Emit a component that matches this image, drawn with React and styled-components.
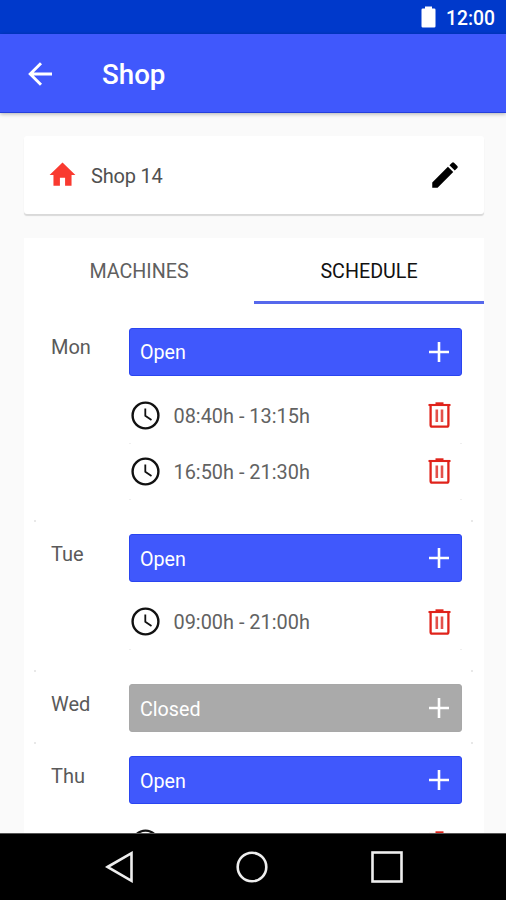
import React from 'react'
import styled, { createGlobalStyle } from 'styled-components'

const days = [
  { name: 'Mon', open: true, hours: ['08:40h - 13:15h', '16:50h - 21:30h'] },
  { name: 'Tue', open: true, hours: ['09:00h - 21:00h'] },
  { name: 'Wed', open: false, hours: [] },
  { name: 'Thu', open: true, hours: [''] },
]

function BackIcon() {
  return (
    <svg width="25" height="24" viewBox="0 0 25 24" fill="none" stroke="#fff" strokeWidth="2.9">
      <path d="M24 12H2.5M13 1.2L2.2 12L13 22.8" />
    </svg>
  )
}

function BatteryIcon() {
  return (
    <svg width="15" height="22" viewBox="0 0 15 22" fill="#fff">
      <path d="M4 0.5h7v2h2.2a1.3 1.3 0 0 1 1.3 1.3v16.4a1.3 1.3 0 0 1-1.3 1.3H1.8a1.3 1.3 0 0 1-1.3-1.3V3.8a1.3 1.3 0 0 1 1.3-1.3H4z" />
    </svg>
  )
}

function HomeIcon() {
  return (
    <svg width="31" height="32" viewBox="0 0 24 24" preserveAspectRatio="none" fill="#f93a30">
      <path d="M10 20v-6h4v6h5v-8h3L12 2.6 2 12h3v8z" />
    </svg>
  )
}

function PencilIcon() {
  return (
    <svg width="34" height="34" viewBox="0 0 24 24" fill="#000">
      <path d="M3 17.25V21h3.75L17.81 9.94l-3.75-3.75L3 17.25zM20.71 7.04a1 1 0 0 0 0-1.41l-2.34-2.34a1 1 0 0 0-1.41 0l-1.83 1.83 3.75 3.75 1.83-1.83z" />
    </svg>
  )
}

function PlusIcon() {
  return (
    <svg width="20" height="20" viewBox="0 0 20 20" stroke="#fff" strokeWidth="2.6">
      <path d="M10 0v20M0 10h20" />
    </svg>
  )
}

function ClockIcon() {
  return (
    <svg width="29" height="29" viewBox="0 0 29 29" fill="none" stroke="#111">
      <circle cx="14.5" cy="14.5" r="12.9" strokeWidth="2.4" />
      <path d="M14.3 7.5v7.3l6.2 4.2" strokeWidth="1.8" />
    </svg>
  )
}

function TrashIcon() {
  return (
    <svg width="23" height="26" viewBox="0 0 23 26" fill="none" stroke="#e0231b">
      <path d="M0.5 3H22.5" strokeWidth="2.1" />
      <path d="M7.5 1.5h8" strokeWidth="2.4" />
      <path d="M2.6 3v20a1.7 1.7 0 0 0 1.7 1.7h14.4a1.7 1.7 0 0 0 1.7-1.7V3" strokeWidth="2.3" />
      <path d="M8.8 7.5v12.5M14 7.5v12.5" strokeWidth="2.6" stroke="#e4514b" />
    </svg>
  )
}

function Day({ day }) {
  return (
    <DayRow $busy={day.hours.length > 0}>
      <DayName>{day.name}</DayName>
      <DayContent>
        <StatusButton $open={day.open}>
          <span>{day.open ? 'Open' : 'Closed'}</span>
          <PlusIcon />
        </StatusButton>
        {day.hours.length > 0 && (
          <HourList>
            {day.hours.map((hour) => (
              <Hour key={hour}>
                <ClockIcon />
                <span>{hour}</span>
                <TrashIcon />
              </Hour>
            ))}
          </HourList>
        )}
      </DayContent>
    </DayRow>
  )
}

function App() {
  return (
    <Screen>
      <GlobalStyle />
      <StatusBar>
        <BatteryIcon />
        <span>12:00</span>
      </StatusBar>
      <AppBar>
        <BackIcon />
        <h1>Shop</h1>
      </AppBar>
      <Content>
        <ShopCard>
          <HomeIcon />
          <span>Shop 14</span>
          <PencilIcon />
        </ShopCard>
        <ScheduleCard>
          <Tabs>
            <Tab>MACHINES</Tab>
            <Tab $active>SCHEDULE</Tab>
          </Tabs>
          <DayList>
            {days.map((day) => (
              <Day key={day.name} day={day} />
            ))}
          </DayList>
        </ScheduleCard>
      </Content>
      <NavBar>
        <svg width="28" height="32" viewBox="0 0 28 32">
          <path d="M2.5 16L26.5 2.2V29.8z" />
        </svg>
        <svg width="32" height="32" viewBox="0 0 32 32">
          <circle cx="16" cy="16" r="14.3" />
        </svg>
        <svg width="32" height="32" viewBox="0 0 32 32">
          <rect x="1.5" y="1.5" width="29" height="29" />
        </svg>
      </NavBar>
    </Screen>
  )
}

export default App

const GlobalStyle = createGlobalStyle`
  body {
    margin: 0;
    font-family: Roboto, sans-serif;
  }

  * {
    box-sizing: border-box;
  }
`

const Screen = styled.div`
  width: 506px;
  height: 900px;
  display: flex;
  flex-direction: column;
  overflow: hidden;
  background: #fafafa;
`

const StatusBar = styled.div`
  flex: none;
  height: 34px;
  padding: 2px 11px 0 0;
  display: flex;
  align-items: center;
  justify-content: flex-end;
  gap: 10px;
  background: #0039cb;
  color: #fff;
  font-size: 19.3px;
  font-weight: 500;

  svg {
    margin-top: -3px;
  }
`

const AppBar = styled.header`
  flex: none;
  height: 79px;
  padding: 1px 0 0 28px;
  display: flex;
  align-items: center;
  gap: 49px;
  background: #4058fc;
  border-bottom: 1px solid #2540dc;
  box-shadow: 0 1px 4px rgba(0, 0, 0, 0.3);
  color: #fff;
  z-index: 1;

  h1 {
    margin: 3px 0 0;
    font-size: 27.7px;
    line-height: 32px;
    font-weight: 500;
  }
`

const Content = styled.main`
  flex: 1;
  min-height: 0;
  padding: 23px 22px 0 24px;
  display: flex;
  flex-direction: column;
  gap: 24px;
  overflow: hidden;
`

const ShopCard = styled.section`
  flex: none;
  height: 78px;
  padding: 0 22px 0 23px;
  display: flex;
  align-items: center;
  background: #fff;
  border-radius: 3px;
  box-shadow: 0 2px 1px #d9d9d9;
  color: #505050;
  font-size: 20px;

  span {
    flex: 1;
    margin: 1px 0 0 13px;
    letter-spacing: -0.2px;
  }
`

const ScheduleCard = styled.section`
  flex: none;
  background: #fff;
`

const Tabs = styled.div`
  height: 66px;
  display: grid;
  grid-template-columns: 1fr 1fr;
`

const Tab = styled.button`
  padding: 4px 0 0;
  border: none;
  border-bottom: 3px solid ${(props) => (props.$active ? '#5668ec' : 'transparent')};
  background: none;
  color: ${(props) => (props.$active ? '#111' : '#606060')};
  font-family: inherit;
  font-size: 19.7px;
`

const DayList = styled.div`
  padding: 11.5px 10px 0;
`

// faint specks where the corners of neighbouring rows meet
const DayRow = styled.div`
  padding: 12px 12.5px ${(props) => (props.$busy ? '22px' : '12px')} 17px;
  display: flex;
  background:
    linear-gradient(#e8e8e8, #e8e8e8) left bottom / 2px 2px no-repeat,
    linear-gradient(#e8e8e8, #e8e8e8) right 1px bottom / 2px 2px no-repeat;

  &:first-child {
    padding-bottom: 22.5px;
  }
`

const DayName = styled.div`
  width: 77.5px;
  padding-top: 8px;
  color: #5a5a5a;
  font-size: 20px;
  line-height: 24px;

  ${DayRow}:first-child & {
    padding-top: 7px;
  }
`

const DayContent = styled.div`
  flex: 1;
`

const StatusButton = styled.button`
  width: 100%;
  height: 48px;
  padding: 0 12px 0 10.5px;
  display: flex;
  align-items: center;
  justify-content: space-between;
  border: 1px solid ${(props) => (props.$open ? '#2a45f0' : '#a8a8a8')};
  border-radius: 3px;
  background: ${(props) => (props.$open ? '#4058fc' : '#aaa')};
  color: #fff;
  font-family: inherit;
  font-size: 19.7px;

  span {
    margin-top: 2px;
  }
`

const HourList = styled.div`
  padding-top: 12px;
`

const Hour = styled.div`
  height: 56px;
  padding: 0 10.5px 0 2px;
  display: flex;
  align-items: center;
  background:
    linear-gradient(#efefef, #efefef) left bottom / 2px 1px no-repeat,
    linear-gradient(#efefef, #efefef) right bottom / 2px 1px no-repeat;
  color: #626262;
  font-size: 19.9px;

  svg {
    margin-top: -1px;
  }

  span {
    flex: 1;
    margin: 1px 0 0 14px;
  }
`

const NavBar = styled.nav`
  flex: none;
  height: 67px;
  padding: 0 103px 0 105px;
  display: flex;
  align-items: center;
  justify-content: space-between;
  background: #000;
  border-top: 1px solid #555;

  svg {
    fill: none;
    stroke: #eee;
    stroke-width: 2.6;
  }
`
